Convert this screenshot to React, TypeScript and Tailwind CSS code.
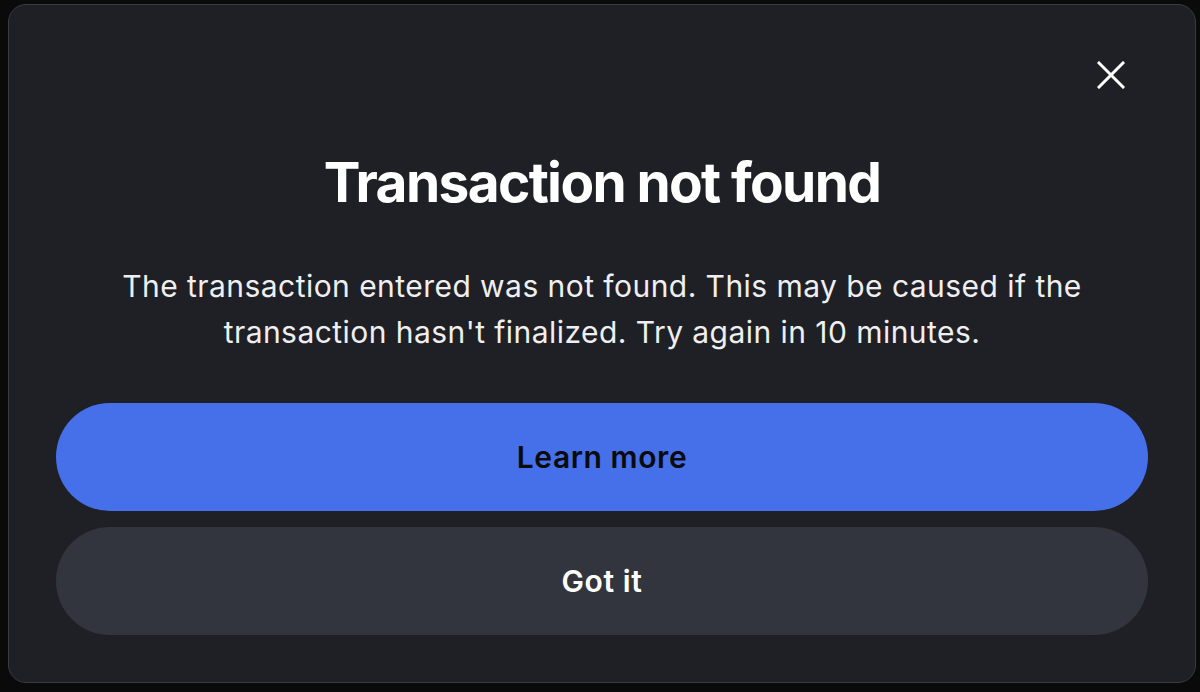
import React from "react";

const CloseIcon: React.FC = () => (
  <svg width="28" height="28" viewBox="0 0 28 28" fill="none">
    <path d="M2 2L26 26M26 2L2 26" stroke="white" strokeWidth="3" strokeLinecap="square" />
  </svg>
);

const App: React.FC = () => {
  return (
    <div
      className="w-[1200px] h-[692px] bg-[#0a0a0b] pt-1 pl-2 overflow-hidden"
      style={{ fontFamily: "Inter, 'Noto Sans', sans-serif" }}
    >
      <div className="w-[1188px] h-[679px] rounded-[18px] border border-[#3a3b41] bg-[#1f2025] px-[47px] pt-[46px] pb-12 flex flex-col">
        <div className="flex justify-end">
          <button className="w-12 h-12 mr-[13px] flex items-center justify-center">
            <CloseIcon />
          </button>
        </div>

        <h1 className="mt-[53px] text-center text-[55px] leading-[60px] font-bold tracking-[-0.03em] text-white">
          Transaction not found
        </h1>

        <p className="mt-[51px] text-center text-[30px] leading-[46px] tracking-[0.015em] text-[#efeff1]">
          The transaction entered was not found. This may be caused if the
          <br />
          transaction hasn't finalized. Try again in 10 minutes.
        </p>

        <div className="mt-12 flex flex-col gap-4">
          <button className="h-[108px] rounded-full bg-[#4670ea] text-[30px] font-semibold tracking-[0.02em] text-[#0a0b0d]">
            Learn more
          </button>
          <button className="h-[108px] rounded-full bg-[#32353d] text-[30px] font-semibold tracking-[0.02em] text-white">
            Got it
          </button>
        </div>
      </div>
    </div>
  );
};

export default App;
